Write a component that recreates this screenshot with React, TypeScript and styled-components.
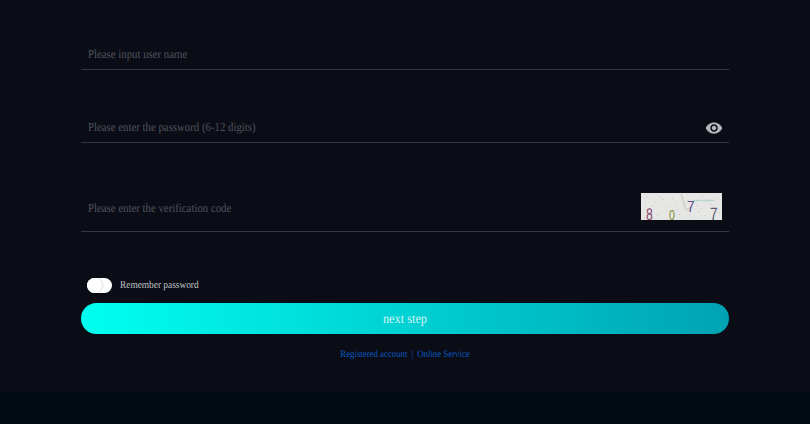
import React from "react";
import styled, { createGlobalStyle } from "styled-components";

const GlobalStyle = createGlobalStyle`
  html, body {
    margin: 0;
    padding: 0;
    background: #010b11;
  }
  * {
    box-sizing: border-box;
  }
`;

const specks = [
  [6, 4], [11, 12], [14, 9], [19, 3], [22, 6], [25, 17], [28, 14], [31, 5], [35, 10], [38, 21],
  [42, 4], [44, 23], [48, 21], [52, 24], [55, 12], [58, 18], [61, 3], [64, 22], [66, 6], [69, 11],
  [72, 15], [76, 5], [78, 19], [4, 10], [16, 22], [36, 16], [60, 15],
];

export default function App() {
  return (
    <Page>
      <GlobalStyle />
      <Main>
        <Field $height={70}>
          <Placeholder>Please input user name</Placeholder>
        </Field>
        <Field $height={73}>
          <Placeholder>Please enter the password (6-12 digits)</Placeholder>
          <EyeIcon viewBox="0 0 24 24">
            <path d="M12 4.5C7 4.5 2.73 7.61 1 12c1.73 4.39 6 7.5 11 7.5s9.27-3.11 11-7.5c-1.73-4.39-6-7.5-11-7.5zM12 17c-2.76 0-5-2.24-5-5s2.24-5 5-5 5 2.24 5 5-2.24 5-5 5zm0-8c-1.66 0-3 1.34-3 3s1.34 3 3 3 3-1.34 3-3-1.34-3-3-3z" />
          </EyeIcon>
        </Field>
        <Field $height={89} $bottom={14}>
          <Placeholder>Please enter the verification code</Placeholder>
          <Captcha viewBox="0 0 81 27">
            <rect width="81" height="27" fill="#e6e6e4" />
            <g fill="#c4c8c4">
              {specks.map(([x, y]) => (
                <rect key={`${x}-${y}`} x={x} y={y} width="1" height="1" />
              ))}
            </g>
            <path d="M40 1 L45 17 L50 14" fill="none" stroke="#c2c8b4" strokeWidth="1" />
            <path d="M52 7.5 H73" fill="none" stroke="#b4d4d0" strokeWidth="1.4" />
            <Digit transform="translate(5 27) scale(.72 1)" fill="#8a4a72">8</Digit>
            <Digit transform="translate(28 27) scale(.62 .85)" fill="#7c8a30">0</Digit>
            <Digit transform="translate(46 19) scale(.8 .95)" fill="#5e4a86">7</Digit>
            <Digit transform="translate(69 27) scale(.8 1.05)" fill="#5a5a74">7</Digit>
          </Captcha>
        </Field>
        <RememberRow>
          <Toggle>
            <Knob />
          </Toggle>
          <RememberLabel>Remember password</RememberLabel>
        </RememberRow>
        <NextButton>
          <ButtonLabel>next step</ButtonLabel>
        </NextButton>
        <Links>
          <span>Registered account</span>
          <Divider>|</Divider>
          <span>Online Service</span>
        </Links>
      </Main>
      <BottomBand />
    </Page>
  );
}

const Page = styled.div`
  width: 810px;
  height: 424px;
  overflow: hidden;
  display: flex;
  flex-direction: column;
  font-family: "Liberation Serif", "Times New Roman", serif;
  text-rendering: geometricPrecision;
`;

const Main = styled.div`
  height: 392px;
  background: #0a0d15;
  padding: 0 81px;
`;

const BottomBand = styled.div`
  flex: 1;
  background: #010b11;
`;

const Field = styled.div<{ $height: number; $bottom?: number }>`
  height: ${(p) => p.$height}px;
  border-bottom: 1px solid #34373d;
  padding: 0 7px ${(p) => p.$bottom ?? 6}px;
  display: flex;
  align-items: flex-end;
  justify-content: space-between;
`;

const Placeholder = styled.span`
  font-size: 10.8px;
  line-height: 16px;
  color: #50545e;
  transform: scaleY(1.12);
`;

const EyeIcon = styled.svg`
  width: 18px;
  height: 18px;
  fill: #b4b8bc;
  margin-right: -1px;
  margin-bottom: -1px;
`;

const Captcha = styled.svg`
  width: 81px;
  height: 27px;
  margin-bottom: -3px;
  overflow: visible;
`;

const Digit = styled.text`
  font-family: "Liberation Sans", Arial, sans-serif;
  font-size: 17px;
`;

const RememberRow = styled.div`
  display: flex;
  align-items: center;
  gap: 8px;
  padding: 46px 0 10px 6px;
  height: 71px;
`;

const Toggle = styled.div`
  width: 25px;
  height: 15px;
  border-radius: 8px;
  background: #ffffff;
  position: relative;
`;

const Knob = styled.div`
  position: absolute;
  left: 0;
  top: 0;
  width: 15px;
  height: 15px;
  border-radius: 50%;
  background: #ffffff;
  box-shadow: 1px 0 2px rgba(0, 0, 0, 0.14);
`;

const RememberLabel = styled.span`
  font-size: 9.35px;
  color: #c4c6ca;
  transform: scaleY(1.12);
`;

const NextButton = styled.div`
  height: 31px;
  padding-top: 1px;
  border-radius: 16px;
  background: linear-gradient(90deg, #00fff0 0%, #00a3b3 100%);
  display: flex;
  align-items: center;
  justify-content: center;
  color: #d4f4f4;
`;

const ButtonLabel = styled.span`
  font-size: 12.3px;
  transform: scaleY(1.12);
`;

const Links = styled.div`
  display: flex;
  justify-content: center;
  gap: 3px;
  padding-top: 13px;
  font-size: 8.8px;
  line-height: 14px;
  color: #0a58c4;
  span {
    transform: scaleY(1.12);
  }
`;

const Divider = styled.span`
  margin: 0 1px;
`;
